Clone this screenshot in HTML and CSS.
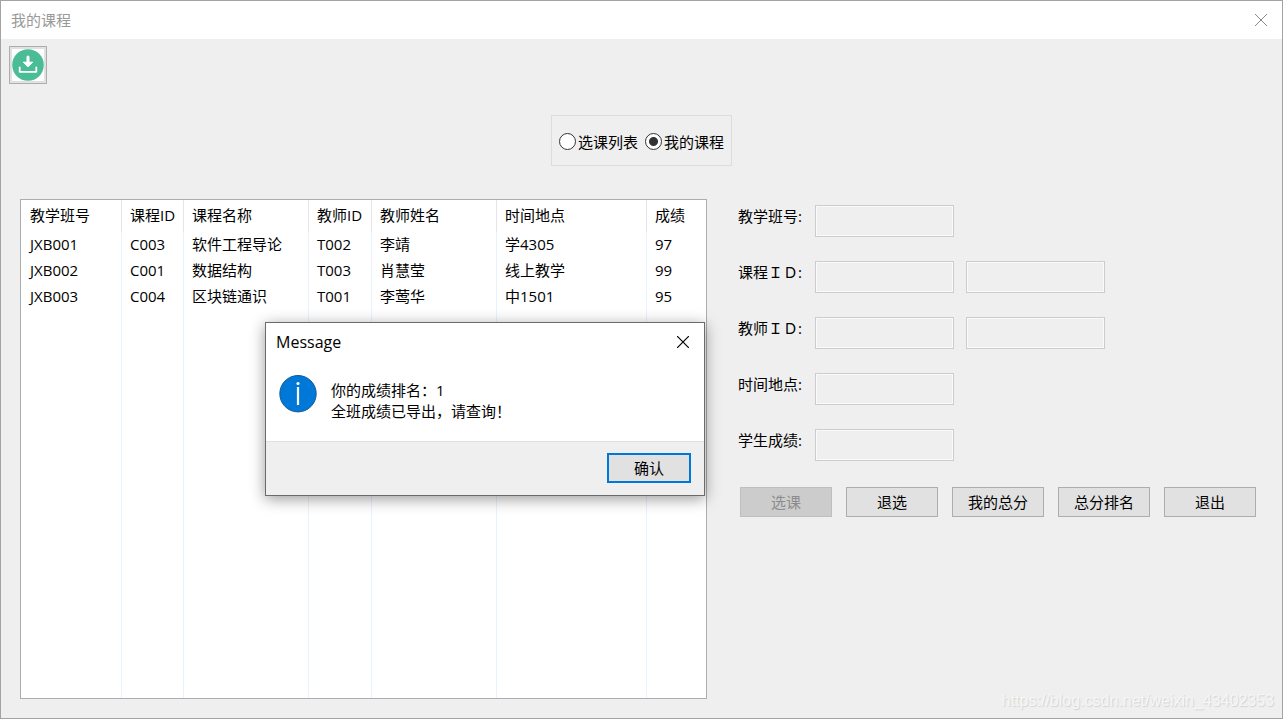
FILE: index.html
```html
<!DOCTYPE html>
<html lang="zh-CN">
<head>
<meta charset="utf-8">
<title>我的课程</title>
<meta name="viewport" content="width=device-width, initial-scale=1">
<link rel="stylesheet" href="styles.css">
</head>
<body>
<div class="window">
  <header class="titlebar">
    <h1 class="titlebar-text">我的课程</h1>
    <button class="close" type="button" aria-label="关闭">
      <svg width="12" height="12" viewBox="0 0 12 12"><path d="M0 0 12 12M12 0 0 12" fill="none" stroke="currentColor"/></svg>
    </button>
  </header>

  <div class="toolbar">
    <button class="export" type="button" aria-label="导出成绩">
      <svg width="32" height="32" viewBox="0 0 32 32">
        <circle cx="16" cy="16" r="15.8" fill="#4abd96"/>
        <path d="M16 8v7" fill="none" stroke="#fff" stroke-width="3" stroke-linecap="round"/>
        <path d="M11.2 13.2h9.6L16 17.8z" fill="#fff" stroke="#fff" stroke-linejoin="round"/>
        <path d="M7.7 18.5v4.3h16.6v-4.3" fill="none" stroke="#fff" stroke-width="1.8" stroke-linecap="round" stroke-linejoin="round"/>
      </svg>
    </button>
  </div>

  <div class="views" role="radiogroup" aria-label="列表">
    <label class="view"><input class="radio" type="radio" name="view">选课列表</label>
    <label class="view"><input class="radio" type="radio" name="view" checked>我的课程</label>
  </div>

  <main class="content">
    <div class="list">
      <table class="courses">
        <colgroup><col class="c-class"><col class="c-id"><col class="c-name"><col class="c-teacher"><col class="c-name"><col class="c-place"><col></colgroup>
        <thead>
          <tr><th>教学班号</th><th>课程ID</th><th>课程名称</th><th>教师ID</th><th>教师姓名</th><th>时间地点</th><th>成绩</th></tr>
        </thead>
        <tbody>
          <tr><td>JXB001</td><td>C003</td><td>软件工程导论</td><td>T002</td><td>李靖</td><td>学4305</td><td>97</td></tr>
          <tr><td>JXB002</td><td>C001</td><td>数据结构</td><td>T003</td><td>肖慧莹</td><td>线上教学</td><td>99</td></tr>
          <tr><td>JXB003</td><td>C004</td><td>区块链通识</td><td>T001</td><td>李莺华</td><td>中1501</td><td>95</td></tr>
          <tr class="filler" aria-hidden="true"><td></td><td></td><td></td><td></td><td></td><td></td><td></td></tr>
        </tbody>
      </table>
    </div>

    <form class="details">
      <div class="field"><label class="label" for="class-no">教学班号:</label><input class="box" id="class-no" type="text" readonly></div>
      <div class="field"><label class="label" for="course-id">课程ＩＤ:</label><input class="box" id="course-id" type="text" readonly><input class="box" type="text" aria-label="课程名称" readonly></div>
      <div class="field"><label class="label" for="teacher-id">教师ＩＤ:</label><input class="box" id="teacher-id" type="text" readonly><input class="box" type="text" aria-label="教师姓名" readonly></div>
      <div class="field"><label class="label" for="place">时间地点:</label><input class="box" id="place" type="text" readonly></div>
      <div class="field"><label class="label" for="score">学生成绩:</label><input class="box" id="score" type="text" readonly></div>
      <div class="actions">
        <button class="btn" type="button" disabled>选课</button>
        <button class="btn" type="button">退选</button>
        <button class="btn" type="button">我的总分</button>
        <button class="btn" type="button">总分排名</button>
        <button class="btn" type="button">退出</button>
      </div>
    </form>
  </main>

  <section class="dialog" role="dialog" aria-labelledby="dialog-title">
    <header class="dialog-head">
      <h2 class="dialog-title" id="dialog-title">Message</h2>
      <button class="close dialog-close" type="button" aria-label="关闭">
        <svg width="12" height="12" viewBox="0 0 12 12"><path d="M0 0 12 12M12 0 0 12" fill="none" stroke="currentColor" stroke-width="1.2"/></svg>
      </button>
    </header>
    <div class="dialog-body">
      <svg class="info" width="38" height="38" viewBox="0 0 38 38">
        <circle cx="19" cy="18.7" r="18.2" fill="#0078d7" stroke="#135995"/>
        <path d="M19 12v18" stroke="#fff" stroke-width="2.2"/>
        <circle cx="19" cy="8.5" r="1.6" fill="#fff"/>
      </svg>
      <p class="message">你的成绩排名：1<br>全班成绩已导出，请查询！</p>
    </div>
    <footer class="dialog-foot"><button class="btn confirm" type="button">确认</button></footer>
  </section>

  <div class="watermark">https://blog.csdn.net/weixin_43402353</div>
</div>
</body>
</html>
```
FILE: styles.css
```css
* { box-sizing: border-box; }

body {
  margin: 0;
  font: 15px/22px "Open Sans", "Noto Sans CJK SC", sans-serif;
  color: #000;
}

button, input { font: inherit; color: inherit; margin: 0; }

.window {
  position: relative;
  display: flex;
  flex-direction: column;
  min-height: 100vh;
  border: 1px solid #a3a3a3;
  background: #efefef;
}

.titlebar {
  display: flex;
  align-items: center;
  justify-content: space-between;
  height: 38px;
  padding: 0 15px 0 10px;
  background: #fff;
  color: #888;
}

.titlebar-text { margin: 0; font-size: 15px; line-height: 20px; font-weight: 400; color: #999; }

.close {
  display: flex;
  padding: 0;
  border: 0;
  background: none;
}

.toolbar { padding: 7px 8px 0; }

.export {
  display: flex;
  padding: 2px;
  border: 1px solid #adadad;
  background: #fff;
  box-shadow: inset 0 0 0 2px #e1e1e1;
}

.views {
  display: flex;
  align-self: center;
  align-items: center;
  gap: 7px;
  height: 51px;
  margin: 31px 0 33px;
  padding: 2px 7px 0 7px;
  border: 1px solid #dcdcdc;
}

.view { display: flex; align-items: center; gap: 2px; }

.radio {
  appearance: none;
  width: 17px;
  height: 17px;
  border: 1px solid #333;
  border-radius: 50%;
  background: #fff;
}

.radio:checked { background: radial-gradient(circle, #333 0 4px, #fff 5px); }

.content {
  display: grid;
  grid-template-columns: minmax(0, 1fr) 518px;
  gap: 31px;
  flex: 1;
  padding: 0 26px 19px 19px;
}

.list {
  display: flex;
  border: 1px solid #abadb3;
  background: #fff;
}

.courses {
  width: 100%;
  table-layout: fixed;
  border-collapse: separate;
  border-spacing: 0;
}

.c-class { width: 101px; }
.c-id { width: 62px; }
.c-teacher { width: 63px; }
.c-name { width: 125px; }
.c-place { width: 150px; }

.courses th, .courses td {
  height: 26px;
  padding: 0 0 2px 8px;
  border-right: 1px solid #e8f2fc;
  font-weight: 400;
  text-align: left;
  white-space: nowrap;
}

.courses th { height: 32px; border-color: #e5e5e5; }
.courses th:first-child, .courses td:first-child { padding-left: 9px; }
.courses .filler td { height: auto; }
.courses th:last-child, .courses td:last-child { border-right: 0; }

.details {
  display: flex;
  flex-direction: column;
  gap: 24px;
  padding-top: 6px;
}

.field { display: flex; gap: 12px; }
.label { width: 65px; white-space: nowrap; }

.box {
  width: 139px;
  height: 32px;
  padding: 0 4px;
  border: 1px solid #ccc;
  background: #efefef;
  box-shadow: inset 0 0 0 1px #fafafa;
}

.actions { display: flex; justify-content: flex-end; gap: 14px; padding-top: 2px; }

.btn {
  width: 92px;
  height: 30px;
  padding: 0;
  border: 1px solid #adadad;
  background: #e1e1e1;
  line-height: 22px;
}

.btn:disabled { border-color: #bfbfbf; background: #ccc; color: #8c8c8c; }

.dialog {
  position: absolute;
  top: 321px;
  left: 264px;
  width: 440px;
  border: 1px solid #6b6b6b;
  background: #fff;
  box-shadow: 0 3px 14px rgba(0, 0, 0, 0.4);
}

.dialog-head {
  display: flex;
  align-items: center;
  justify-content: space-between;
  height: 38px;
  padding: 0 15px 0 10px;
}

.dialog-title { margin: 0; font-size: 16px; font-weight: 400; }

.dialog-body { display: flex; gap: 14px; height: 80px; padding: 14px 13px; }

.message { margin: 5px 0 0; line-height: 21px; }

.dialog-foot {
  display: flex;
  justify-content: flex-end;
  padding: 11px 13px 12px;
  border-top: 1px solid #dfdfdf;
  background: #efefef;
}

.confirm { width: 84px; border: 2px solid #0078d7; }

.watermark {
  position: absolute;
  right: 8px;
  bottom: 6px;
  font: 16px/22px "Liberation Sans", sans-serif;
  color: #f6f6f6;
  text-shadow: 1px 1px 1px #d2d2d2;
}
```
